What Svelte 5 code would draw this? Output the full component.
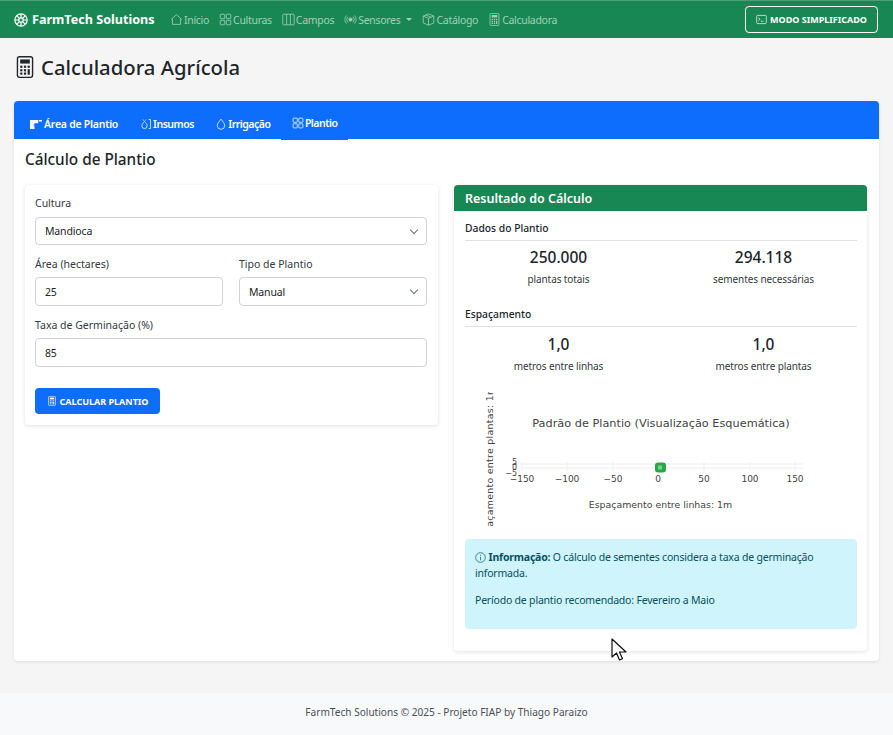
<script>
  const navItems = [
    { label: 'Início', icon: 'house' },
    { label: 'Culturas', icon: 'grid' },
    { label: 'Campos', icon: 'cols' },
    { label: 'Sensores', icon: 'broad', caret: true },
    { label: 'Catálogo', icon: 'box' },
    { label: 'Calculadora', icon: 'calc' }
  ];
  const xticks = [
    { x: 522, t: '−150' }, { x: 567, t: '−100' }, { x: 613, t: '−50' }, { x: 658, t: '0' },
    { x: 704, t: '50' }, { x: 750, t: '100' }, { x: 795, t: '150' }
  ];
</script>

{#snippet icon(name, size)}
  <svg class="ic" width={size} height={size} viewBox="0 0 16 16" fill="none" stroke="currentColor" stroke-width="1">
    {#if name === 'house'}
      <path d="M1.500 8 8 2l6.500 6M3 7v7h10V7" />
    {:else if name === 'grid'}
      <rect x="1.500" y="1.500" width="5.500" height="5.500" rx="0.600" /><rect x="9" y="1.500" width="5.500" height="5.500" rx="0.600" /><rect x="1.500" y="9" width="5.500" height="5.500" rx="0.600" /><rect x="9" y="9" width="5.500" height="5.500" rx="0.600" />
    {:else if name === 'cols'}
      <rect x="1" y="1.500" width="14" height="13" rx="1" /><path d="M5.700 1.500v13M10.300 1.500v13" />
    {:else if name === 'broad'}
      <circle cx="8" cy="8" r="2" fill="currentColor" /><path d="M5 4.500a5 5 0 0 0 0 7M11 4.500a5 5 0 0 1 0 7M3 3a7.500 7.500 0 0 0 0 10M13 3a7.500 7.500 0 0 1 0 10" />
    {:else if name === 'box'}
      <path d="M8 1 14.500 3.800v8.400L8 15l-6.500-2.800V3.800zM1.500 3.800 8 6.600l6.500-2.800M8 6.600V15M4.700 2.400l6.500 2.800" />
    {:else if name === 'calc'}
      <rect x="2.500" y="0.500" width="11" height="15" rx="1.500" />
      <rect x="4.500" y="2.500" width="7" height="3" fill="currentColor" stroke="none" />
      <g fill="currentColor" stroke="none">
        <rect x="4.500" y="7" width="1.600" height="1.600" /><rect x="7.200" y="7" width="1.600" height="1.600" /><rect x="9.900" y="7" width="1.600" height="1.600" />
        <rect x="4.500" y="9.600" width="1.600" height="1.600" /><rect x="7.200" y="9.600" width="1.600" height="1.600" /><rect x="9.900" y="9.600" width="1.600" height="4" />
        <rect x="4.500" y="12" width="1.600" height="1.600" /><rect x="7.200" y="12" width="1.600" height="1.600" />
      </g>
    {:else if name === 'terminal'}
      <rect x="1" y="2" width="14" height="12" rx="1.500" /><path d="M3.500 5.500 6 7.500l-2.500 2M7 10.500h4" />
    {:else if name === 'area'}
      <path fill="currentColor" stroke="none" d="M0 2.500h11v4.500H6v1H5v1h1v1H5v1h1v3.500H0zM12 2.500h4v2h-4z" />
    {:else if name === 'drops'}
      <path d="M6 4.500c2 2.500 3.500 4 3.500 6a3.500 3.500 0 0 1-7 0c0-2 1.500-3.500 3.500-6zM4 2l1 1.500M8 2 7 3.500M11.500 2h2.500v12h-2.500" />
    {:else if name === 'drop'}
      <path d="M8 1.500c2.500 3.500 5 5.800 5 8.500a5 5 0 0 1-10 0c0-2.700 2.500-5 5-8.500z" />
    {:else if name === 'info'}
      <circle cx="8" cy="8" r="7" /><path d="M8 7v5M8 4v1.500" />
    {/if}
  </svg>
{/snippet}

<div class="page">
  <header class="navbar">
    <div class="brand">
      <svg class="ic" width="14" height="14" viewBox="0 0 16 16" fill="none" stroke="currentColor" stroke-width="1.400">
        <circle cx="8" cy="8" r="7" /><circle cx="8" cy="8" r="2.500" />
        <path d="M8 1v4.500M8 10.500V15M1 8h4.500M10.500 8H15M3 3l3.200 3.200M9.800 9.800 13 13M13 3 9.800 6.200M6.200 9.800 3 13" />
      </svg>
      <span>FarmTech Solutions</span>
    </div>
    <nav class="links">
      {#each navItems as item}
        <span class="link">
          {@render icon(item.icon, 13)}<span>{item.label}</span>{#if item.caret}<i class="caret"></i>{/if}
        </span>
      {/each}
    </nav>
    <button class="simple">{@render icon('terminal', 11)}<span>MODO SIMPLIFICADO</span></button>
  </header>

  <main class="main">
    <h1>{@render icon('calc', 22)}<span>Calculadora Agrícola</span></h1>

    <section class="card">
      <div class="tabs">
        <span class="tab">{@render icon('area', 12)}Área de Plantio</span>
        <span class="tab">{@render icon('drops', 12)}Insumos</span>
        <span class="tab">{@render icon('drop', 12)}Irrigação</span>
        <span class="tab active">{@render icon('grid', 12)}Plantio</span>
      </div>
      <div class="body">
        <h2>Cálculo de Plantio</h2>
        <div class="cols">
          <div class="panel form">
            <label class="field">
              <span>Cultura</span>
              <div class="control first select">Mandioca</div>
            </label>
            <div class="two">
              <label class="field">
                <span>Área (hectares)</span>
                <div class="control">25</div>
              </label>
              <label class="field">
                <span>Tipo de Plantio</span>
                <div class="control select">Manual</div>
              </label>
            </div>
            <label class="field">
              <span>Taxa de Germinação (%)</span>
              <div class="control">85</div>
            </label>
            <button class="calc">{@render icon('calc', 10)}<span>CALCULAR PLANTIO</span></button>
          </div>

          <div class="panel result">
            <div class="rhead">Resultado do Cálculo</div>
            <div class="rbody">
              <h3>Dados do Plantio</h3>
              <div class="stats top">
                <div><b>250.000</b><small>plantas totais</small></div>
                <div><b>294.118</b><small>sementes necessárias</small></div>
              </div>
              <h3 class="sp">Espaçamento</h3>
              <div class="stats">
                <div><b>1,0</b><small>metros entre linhas</small></div>
                <div><b>1,0</b><small>metros entre plantas</small></div>
              </div>
              <svg class="chart" width="392" height="150" viewBox="465 385 392 150">
                <g class="plot-text">
                  <text x="661" y="428" text-anchor="middle" font-size="11.300">Padrão de Plantio (Visualização Esquemática)</text>
                  <text x="660.500" y="509" text-anchor="middle" font-size="9.400">Espaçamento entre linhas: 1m</text>
                  <clipPath id="yclip"><rect x="480" y="393" width="20" height="135" /></clipPath>
                  <g clip-path="url(#yclip)">
                    <text transform="translate(493 466) rotate(-90)" text-anchor="middle" font-size="9.400" letter-spacing="0.300">Espaçamento entre plantas: 1m</text>
                  </g>
                </g>
                <g stroke="#eeeeee" stroke-width="1">
                  {#each xticks as t}
                    <line x1={t.x} x2={t.x} y1="463" y2="472" />
                  {/each}
                  <line x1="520" x2="803" y1="465" y2="465" />
                  <line x1="520" x2="803" y1="469" y2="469" />
                </g>
                <g class="plot-text">
                  {#each xticks as t}
                    <text x={t.x} y="483" text-anchor="middle" font-size="9">{t.t}</text>
                  {/each}
                  <text x="517" y="466" text-anchor="end" font-size="8">5</text>
                  <text x="517" y="471" text-anchor="end" font-size="8">0</text>
                  <text x="517" y="477" text-anchor="end" font-size="8">−5</text>
                </g>
                <rect x="655" y="463.500" width="11" height="10" rx="3" fill="#28a745" />
                <rect x="658" y="466.500" width="4" height="4" fill="#7ccf8d" />
              </svg>
              <div class="alert">
                <p>{@render icon('info', 11)} <strong>Informação:</strong> O cálculo de sementes considera a taxa de germinação informada.</p>
                <p>Período de plantio recomendado: Fevereiro a Maio</p>
              </div>
            </div>
          </div>
        </div>
      </div>
    </section>
  </main>

  <footer class="footer">FarmTech Solutions © 2025 - Projeto FIAP by Thiago Paraizo</footer>

  <svg class="cursor" width="17" height="25" viewBox="0 0 17 25">
    <path d="M1 1v18l4.500-4 3 7 3-1.300-3-6.700H15z" fill="#fff" stroke="#111" stroke-width="1.200" stroke-linejoin="round" />
  </svg>
</div>

<style>
  :global(body) {
    margin: 0;
    background: #f5f5f5;
    font-family: "Noto Sans", "Open Sans", sans-serif;
    color: #212529;
  }
  .page { position: relative; width: 893px; height: 735px; overflow: hidden; display: flex; flex-direction: column; }
  .ic { flex: none; }
  .navbar {
    height: 38px; box-sizing: border-box; background: #198754; border-top: 1px solid #4d9f78;
    display: flex; align-items: center; padding: 0 15px 0 14px; color: #fff;
  }
  .brand { display: flex; align-items: center; gap: 4px; font-size: 12.600px; font-weight: 700; width: 156px; white-space: nowrap; }
  .links { display: flex; align-items: center; gap: 10px; flex: 1; font-size: 10.500px; letter-spacing: -0.300px; color: #a3cfb8; }
  .link { display: flex; align-items: center; gap: 1px; white-space: nowrap; }
  .caret { display: inline-block; margin-left: 5px; border-top: 3.500px solid; border-left: 3px solid transparent; border-right: 3px solid transparent; }
  .simple {
    width: 133px; height: 27px; display: flex; align-items: center; justify-content: center; gap: 3px;
    background: transparent; border: 1px solid #fff; border-radius: 4px; color: #fff;
    font: 700 9px "Noto Sans", sans-serif; padding: 0;
  }
  .main { flex: 1; padding: 0 14px; display: flex; flex-direction: column; }
  h1 { margin: 0 0 5px; height: 58px; display: flex; align-items: center; gap: 5px; font-size: 20.300px; font-weight: 500; color: #212529; }
  h1 :global(.ic) { width: 22px; height: 24px; }
  .card { background: #fff; border-radius: 4px; height: 560px; box-shadow: 0 1px 3px rgba(0,0,0,.1); overflow: hidden; }
  .tabs { height: 38px; background: #0d6efd; display: flex; padding-left: 5px; color: #fff; font-size: 10.500px; letter-spacing: -0.250px; font-weight: 600; }
  .tab { display: flex; align-items: center; gap: 2px; padding: 6px 11px 0; height: 39px; box-sizing: border-box; white-space: nowrap; }
  .tab + .tab { gap: 1px; letter-spacing: -0.500px; padding-right: 10.500px; }
  .tab.active { border-bottom: 1px solid #198754; }
  .body { padding: 0 12px 0 11px; }
  h2 { margin: 0 0 2px; height: 44px; padding-bottom: 4px; box-sizing: border-box; display: flex; align-items: center; font-size: 15.300px; font-weight: 500; }
  .cols { display: grid; grid-template-columns: repeat(2, minmax(0, 1fr)); gap: 16px; align-items: start; }
  .panel { background: #fff; border-radius: 4px; box-shadow: 0 1px 4px rgba(0,0,0,.12); }
  .form { height: 240px; box-sizing: border-box; padding: 11px 11px 0 10px; }
  .field { display: block; font-size: 10.500px; margin-bottom: 12px; }
  .field > span { display: block; height: 20px; line-height: 14px; color: #343a40; }
  .control {
    position: relative; height: 29px; box-sizing: border-box; border: 1px solid #ced4da; border-radius: 4px;
    padding: 0 9px; display: flex; align-items: center; font-size: 10.500px; letter-spacing: -0.150px; color: #212529; background: #fff;
  }
  .control.first { margin-top: 1px; height: 28px; }
  .select::after {
    content: ""; position: absolute; right: 9px; top: 9px; width: 5px; height: 5px;
    border-right: 1px solid #6c757d; border-bottom: 1px solid #6c757d; transform: rotate(45deg);
  }
  .two { display: grid; grid-template-columns: 1fr 1fr; gap: 16px; }
  .calc {
    margin-top: 21px; width: 125px; height: 26px; background: #0d6efd; border: 0; border-radius: 4px; color: #fff;
    display: flex; align-items: center; justify-content: center; gap: 3px; font: 700 9px "Noto Sans", sans-serif; padding: 0;
  }
  .result { height: 466px; overflow: hidden; }
  .rhead { height: 26px; background: #198754; color: #fff; font-size: 12.500px; font-weight: 600; display: flex; align-items: center; padding: 0 11px; }
  .rbody { padding: 10px 10px 0 11px; }
  h3 { margin: 0; height: 20px; box-sizing: border-box; border-bottom: 1px solid #dee2e6; font-size: 10.300px; font-weight: 500; line-height: 15px; }
  h3.sp { margin-top: 21px; }
  .stats { display: grid; grid-template-columns: 1fr 1fr; text-align: center; padding-top: 6px; margin: 0 -9px; }
  .stats.top { padding-top: 5px; }
  .stats b { display: block; font-size: 15.500px; font-weight: 500; line-height: 22px; }
  .stats small { display: block; font-size: 10px; letter-spacing: -0.100px; line-height: 14px; margin-top: 4px; color: #343a40; }
  .chart { display: block; margin-top: 11px; }
  .plot-text text { font-family: "DejaVu Sans", sans-serif; fill: #444; }
  .alert { margin-top: 5px; height: 90px; box-sizing: border-box; background: #cff4fc; color: #055160; border-radius: 4px; padding: 10px; font-size: 10.500px; letter-spacing: -0.200px; line-height: 16px; }
  .alert p { margin: 0 0 11px; }
  .alert :global(.ic) { vertical-align: -2px; }
  .footer { height: 42px; box-sizing: border-box; padding-bottom: 4px; background: #f8f9fa; display: flex; align-items: center; justify-content: center; font-size: 10.100px; color: #495057; }
  .cursor { position: absolute; left: 611px; top: 638px; }
</style>
